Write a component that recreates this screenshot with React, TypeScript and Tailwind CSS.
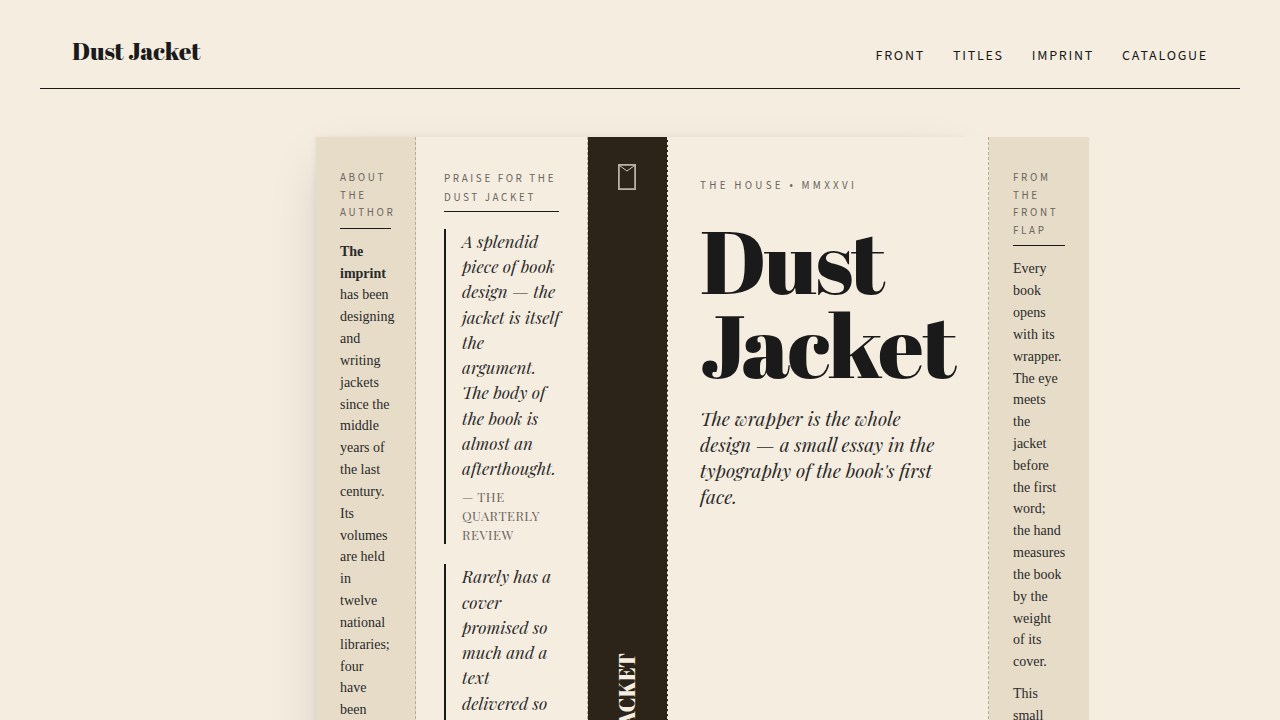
const flapTitle =
  "border-b border-[#1a1a1a] pb-1.5 font-['Source_Sans_3','Noto_Sans_CJK_SC',sans-serif] text-[11px] leading-[1.6] tracking-[0.24em] text-[#6b6762] uppercase";
const flapBody =
  "mt-3 flex flex-col gap-2.5 font-['Liberation_Serif',serif] text-[14px] leading-[1.56] text-[#2a2a2a]";

const navItems = ["Front", "Titles", "Imprint", "Catalogue"];

function Quote({ text, source }: { text: string; source?: string }) {
  return (
    <blockquote className="border-l-2 border-[#1a1a1a] pl-4 font-['Playfair_Display','Liberation_Serif',serif] last:pb-8">
      <p className="-mr-1 text-[17px] leading-[1.485] whitespace-pre-line text-[#2a2a2a] italic">{text}</p>
      {source && (
        <cite className="mt-1.5 block text-[13px] leading-[19px] tracking-[0.04em] text-[#6b6762] uppercase not-italic">
          — {source}
        </cite>
      )}
    </blockquote>
  );
}

function EnvelopeMark() {
  return (
    <svg viewBox="0 0 18 26" className="h-[26px] w-[18px] shrink-0" fill="none" stroke="#b9b1a4" aria-hidden="true">
      <rect x="0.9" y="0.9" width="16.2" height="24.2" strokeWidth="1.8" />
      <path d="M1.5 1.5L9 7L16.5 1.5" stroke="#cfc7b9" strokeWidth="1" />
    </svg>
  );
}

export default function App() {
  return (
    <div className="h-screen overflow-hidden bg-[#f5ede0] px-10 text-[#1a1a1a]">
      <header className="flex items-baseline justify-between border-b border-[#1a1a1a] px-8 pt-[35px] pb-[21px]">
        <a
          href="#front"
          className="font-['Abril_Fatface','Playfair_Display','Liberation_Serif',serif] text-[24px] leading-8"
        >
          Dust Jacket
        </a>
        <nav className="flex gap-7 font-['Source_Sans_3','Noto_Sans_CJK_SC',sans-serif] text-[14px] leading-5 tracking-[0.125em] uppercase">
          {navItems.map((item) => (
            <a key={item} href={"#" + item.toLowerCase()}>
              {item}
            </a>
          ))}
        </nav>
      </header>

      <main className="mx-auto mt-12 grid w-[54%] grid-cols-[100px_172px_80px_321px_100px] shadow-[0_1px_6px_rgba(0,0,0,0.07),0_20px_50px_-8px_rgba(0,0,0,0.15)]">
        <section className="border-r border-dashed border-[#b5aa90] bg-[#e6dcc8] px-6 py-8">
          <h2 className={flapTitle}>About the Author</h2>
          <div className={flapBody}>
            <p>
              <strong>The imprint</strong> has been designing and writing jackets since the middle years of the last
              century. Its volumes are held in twelve national libraries; four have been
            </p>
          </div>
        </section>

        <section className="border-r border-dashed border-[#b5aa90] bg-[#f5ede0] px-7 py-8">
          <h2 className="border-b border-[#1a1a1a] pb-1 font-['Source_Sans_3','Noto_Sans_CJK_SC',sans-serif] text-[11px] leading-[19px] tracking-[0.24em] text-[#6b6762] uppercase">
            Praise for the Dust Jacket
          </h2>
          <div className="mt-[17px] flex flex-col gap-5">
            <Quote
              text={"A splendid piece of book design — the jacket is itself the\nargument. The body of the book is almost an afterthought."}
              source="The Quarterly Review"
            />
            <Quote text={"Rarely has a cover promised so much and a text\ndelivered so"} />
          </div>
        </section>

        <section className="flex flex-col items-center border-r border-dashed border-[#f5ede0] bg-[#2c2418] pt-[27px] pr-px">
          <EnvelopeMark />
          <p className="mt-[463px] rotate-180 font-['Abril_Fatface','Playfair_Display','Liberation_Serif',serif] text-[22px] leading-7 whitespace-nowrap text-[#f5ede0] uppercase [writing-mode:vertical-rl]">
            Dust Jacket
          </p>
        </section>

        <section className="border-r border-dashed border-[#b5aa90] bg-[#f5ede0] px-8 py-10">
          <p className="font-['Source_Sans_3','Noto_Sans_CJK_SC',sans-serif] text-[11px] leading-[18px] tracking-[0.3em] text-[#6b6762] uppercase">
            The House • MMXXVI
          </p>
          <h1 className="mt-6 font-['Abril_Fatface','Playfair_Display','Liberation_Serif',serif] text-[88px] leading-[84px] tracking-[-0.02em]">
            Dust Jacket
          </h1>
          <p className="mt-[18px] font-['Playfair_Display','Liberation_Serif',serif] text-[19px] leading-[26px] text-[#2a2a2a] italic">
            The wrapper is the whole design — a small essay in the typography of the book's first face.
          </p>
        </section>

        <section className="bg-[#e6dcc8] px-6 py-8">
          <h2 className={flapTitle}>From the Front Flap</h2>
          <div className={flapBody}>
            <p>
              Every book opens with its wrapper. The eye meets the jacket before the first word; the hand measures the
              book by the weight of its cover.
            </p>
            <p>This small</p>
          </div>
        </section>
      </main>
    </div>
  );
}
